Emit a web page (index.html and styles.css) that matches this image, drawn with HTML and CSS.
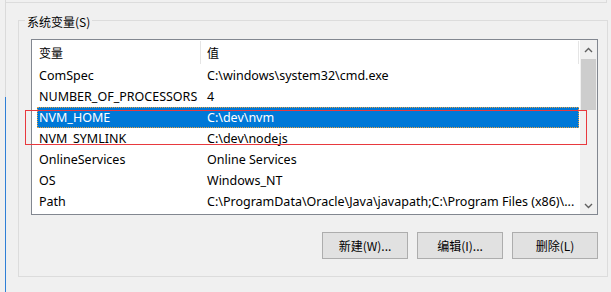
FILE: index.html
```html
<!DOCTYPE html>
<html lang="zh-CN">
<head>
<meta charset="utf-8">
<title>系统变量</title>
<link rel="stylesheet" href="styles.css">
</head>
<body>
<div class="prev-group"></div>
<div class="group">
  <div class="group-title">系统变量(S)</div>
  <div class="listbox">
    <div class="list">
      <div class="header">
        <div class="hcell hcol1">变量</div>
        <div class="hcell hcol2">值</div>
      </div>
      <div class="row"><div class="c1">ComSpec</div><div class="c2">C:\windows\system32\cmd.exe</div></div>
      <div class="row"><div class="c1">NUMBER_OF_PROCESSORS</div><div class="c2">4</div></div>
      <div class="row selected"><div class="c1">NVM_HOME</div><div class="c2">C:\dev\nvm</div></div>
      <div class="row"><div class="c1">NVM_SYMLINK</div><div class="c2">C:\dev\nodejs</div></div>
      <div class="row"><div class="c1">OnlineServices</div><div class="c2">Online Services</div></div>
      <div class="row"><div class="c1">OS</div><div class="c2">Windows_NT</div></div>
      <div class="row"><div class="c1">Path</div><div class="c2">C:\ProgramData\Oracle\Java\javapath;C:\Program Files (x86)\...</div></div>
    </div>
    <div class="scrollbar">
      <div class="sb-btn sb-up">
        <svg width="9" height="6" viewBox="0 0 9 6"><path d="M1 5 L4.5 1.5 L8 5" fill="none" stroke="#606060" stroke-width="1.4"/></svg>
      </div>
      <div class="sb-thumb"></div>
      <div class="sb-track"></div>
      <div class="sb-btn sb-down">
        <svg width="9" height="6" viewBox="0 0 9 6"><path d="M1 1 L4.5 4.5 L8 1" fill="none" stroke="#606060" stroke-width="1.4"/></svg>
      </div>
    </div>
  </div>
  <div class="buttons">
    <button class="btn">新建(W)...</button>
    <button class="btn">编辑(I)...</button>
    <button class="btn">删除(L)</button>
  </div>
</div>
<div class="annotation"></div>
</body>
</html>
```
FILE: styles.css
```css
html, body {
  margin: 0;
  padding: 0;
}
body {
  width: 611px;
  height: 292px;
  overflow: hidden;
  background-color: #f0f0f0;
  background-image:
    linear-gradient(#dadada, #dadada),
    linear-gradient(#2f7fd6, #2f7fd6);
  background-repeat: no-repeat;
  background-size: 1px 97px, 1px 195px;
  background-position: 5px 0, 5px 97px;
  font-family: "Noto Sans", "Noto Sans CJK SC", sans-serif;
  font-size: 12px;
  color: #000;
  position: relative;
}
.prev-group {
  margin-left: 6px;
  width: 600px;
  height: 2px;
  border-right: 1px solid #dcdcdc;
  border-bottom: 1px solid #dcdcdc;
}
.group {
  margin-top: 17px;
  margin-left: 18px;
  width: 567px;
  padding: 0 9px 17px 12px;
  border: 1px solid #dcdcdc;
}
.group-title {
  width: fit-content;
  margin: -7px 0 0 -6px;
  padding: 0 2px;
  line-height: 16px;
  background: #f0f0f0;
  font-family: "Noto Sans CJK SC", sans-serif;
}
.listbox {
  margin-top: 9px;
  height: 174px;
  border: 1px solid #828790;
  background: #fff;
  display: flex;
}
.list {
  width: 548px;
  display: flex;
  flex-direction: column;
}
.header {
  height: 25px;
  display: flex;
  align-items: flex-start;
}
.hcell {
  margin-top: 1px;
  height: 23px;
  line-height: 23px;
  border-right: 1px solid #e5e5e5;
  font-family: "Noto Sans CJK SC", sans-serif;
}
.hcol1 {
  width: 161px;
  padding-left: 7px;
}
.hcol2 {
  width: 371px;
  padding-left: 6px;
}
.row {
  margin-left: 5px;
  width: 542px;
  height: 21px;
  line-height: 21px;
  font-size: 12.5px;
  display: flex;
  white-space: nowrap;
}
.c1 {
  width: 166px;
  padding-left: 2px;
  overflow: hidden;
}
.c2 {
  flex: 1;
  padding-left: 2px;
  overflow: hidden;
}
.row.selected {
  background: #0078d7;
  color: #fff;
  outline: 1px dotted #e8a040;
  outline-offset: -1px;
}
.scrollbar {
  width: 17px;
  background: #f0f0f0;
  display: flex;
  flex-direction: column;
}
.sb-btn {
  display: flex;
  align-items: center;
  justify-content: center;
}
.sb-up {
  height: 19px;
}
.sb-down {
  height: 17px;
}
.sb-thumb {
  height: 51px;
  margin: 0 1px;
  background: #cdcdcd;
}
.sb-track {
  flex: 1;
}
.buttons {
  margin-top: 17px;
  display: flex;
  justify-content: flex-end;
  gap: 9px;
}
.btn {
  width: 86px;
  height: 27px;
  margin: 0;
  padding: 0;
  border: 1px solid #adadad;
  background: #e1e1e1;
  font-family: "Noto Sans CJK SC", sans-serif;
  font-size: 12px;
  color: #000;
}
.annotation {
  position: absolute;
  left: 25px;
  top: 110px;
  width: 560px;
  height: 33px;
  border: 1px solid #e8393e;
}
```
